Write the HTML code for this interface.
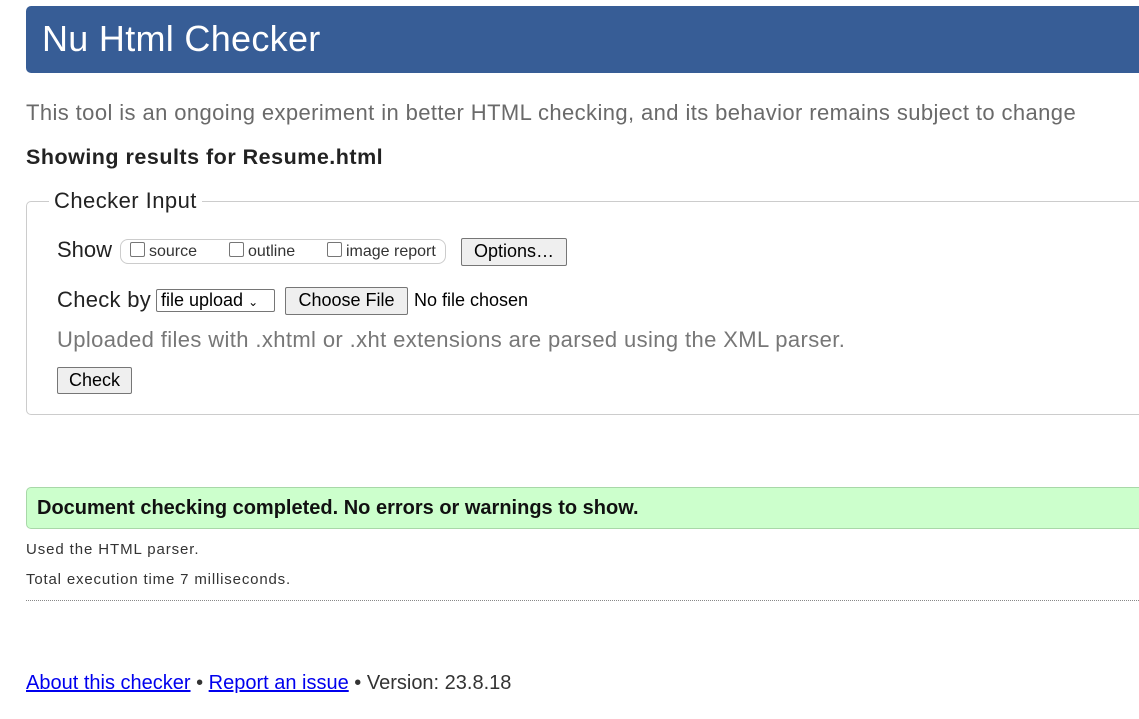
<!DOCTYPE html>
<html><head><meta charset="utf-8"><style>
body{margin:0;width:1139px;height:719px;overflow:hidden;background:#fff;font-family:"Liberation Sans",Arial,sans-serif;position:relative;color:#222}
.a{position:absolute;white-space:nowrap}
.btn{position:absolute;background:#efefef;border:1px solid #767676;border-radius:2px;box-sizing:border-box;font-size:18px;color:#000;text-align:center}
.cb{display:inline-block;width:13px;height:13px;border:1px solid #767676;border-radius:2px;vertical-align:-1px;margin-right:4px;background:#fff}
</style></head><body>
<div class="a" style="left:26px;top:6px;width:1130px;height:67px;background:#375d96;border-radius:5px 0 0 5px"></div>
<div class="a" style="left:42px;top:17px;font-size:36px;color:#fff;line-height:44px;letter-spacing:0.3px">Nu Html Checker</div>
<div class="a" style="left:26px;top:99px;font-size:22px;color:#6a6a6a;line-height:28px;letter-spacing:0.4px">This tool is an ongoing experiment in better HTML checking, and its behavior remains subject to change</div>
<div class="a" style="left:26px;top:144px;font-size:21.5px;font-weight:bold;line-height:26px;letter-spacing:0.5px">Showing results for Resume.html</div>
<div class="a" style="left:26px;top:201px;width:1130px;height:214px;border:1px solid #ccc;border-radius:5px;box-sizing:border-box"></div>
<div class="a" style="left:49px;top:188px;padding:0 5px;background:#fff;font-size:22px;line-height:26px;letter-spacing:0.45px">Checker Input</div>
<div class="a" style="left:57px;top:237px;font-size:22px;line-height:26px">Show</div>
<div class="a" style="left:120px;top:239px;width:326px;height:25px;border:1px solid #ccc;border-radius:8px;box-sizing:border-box"></div>
<div class="a" style="left:130px;top:241px;font-size:16px;line-height:22px;color:#333"><span class="cb"></span>source</div>
<div class="a" style="left:229px;top:241px;font-size:16px;line-height:22px;color:#333"><span class="cb"></span>outline</div>
<div class="a" style="left:327px;top:241px;font-size:16px;line-height:22px;color:#333"><span class="cb"></span>image report</div>
<div class="btn" style="left:461px;top:238px;width:106px;height:28px;line-height:25px">Options…</div>
<div class="a" style="left:57px;top:287px;font-size:22px;line-height:26px;letter-spacing:0.3px">Check by</div>
<div class="a" style="left:156px;top:289px;width:119px;height:23px;border:1px solid #767676;border-radius:2px;box-sizing:border-box;font-size:18px;line-height:21px;padding-left:4px;color:#000">file upload <span style="font-size:12px">&#8964;</span></div>
<div class="btn" style="left:285px;top:287px;width:123px;height:28px;line-height:25px">Choose File</div>
<div class="a" style="left:414px;top:289px;font-size:18px;line-height:22px;color:#000">No file chosen</div>
<div class="a" style="left:57px;top:327px;font-size:22px;line-height:26px;color:#777;letter-spacing:0.38px">Uploaded files with .xhtml or .xht extensions are parsed using the XML parser.</div>
<div class="btn" style="left:57px;top:367px;width:75px;height:27px;line-height:24px">Check</div>
<div class="a" style="left:26px;top:487px;width:1130px;height:42px;background:#ccffcc;border:1px solid #a8d8a8;border-radius:5px 0 0 5px;box-sizing:border-box"></div>
<div class="a" style="left:37px;top:496px;font-size:20px;font-weight:bold;line-height:24px;color:#111">Document checking completed. No errors or warnings to show.</div>
<div class="a" style="left:26px;top:541px;font-size:15px;line-height:18px;color:#333;letter-spacing:0.9px">Used the HTML parser.</div>
<div class="a" style="left:26px;top:571px;font-size:15px;line-height:18px;color:#333;letter-spacing:0.83px">Total execution time 7 milliseconds.</div>
<div class="a" style="left:26px;top:600px;width:1113px;border-top:1px dotted #888"></div>
<div class="a" style="left:26px;top:671px;font-size:20px;line-height:24px;color:#333"><span style="color:#0000ee;text-decoration:underline">About this checker</span> • <span style="color:#0000ee;text-decoration:underline">Report an issue</span> • Version: 23.8.18</div>
</body></html>
